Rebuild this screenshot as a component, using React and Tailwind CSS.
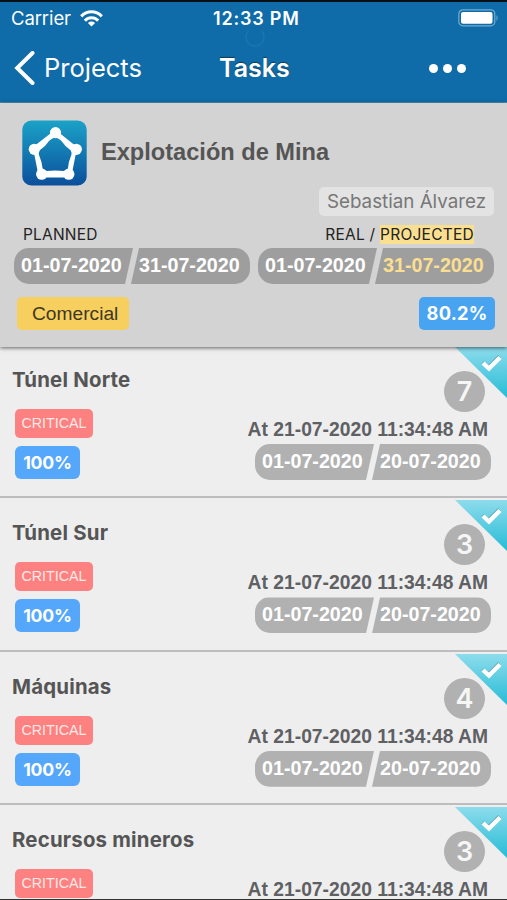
const tasks = [
  { name: 'Túnel Norte', count: 7 },
  { name: 'Túnel Sur', count: 3 },
  { name: 'Máquinas', count: 4 },
  { name: 'Recursos mineros', count: 3 },
];

function StatusBar() {
  return (
    <div className="relative flex h-[32px] items-center pt-px text-white">
      <span className="ml-[11px] w-[70px] text-[18.5px] leading-none tracking-[-0.1px]">Carrier</span>
      <svg width="23" height="18" viewBox="0 0 23 18" className="-ml-px" fill="none" stroke="white" strokeWidth="3">
        <path d="M1.2 6.4 C7 0.3 16 0.3 21.8 6.4" />
        <path d="M4.8 10.6 C8.6 6.7 14.4 6.7 18.2 10.6" />
        <path d="M11.5 16.6 L7.9 12.9 C10 11.1 13 11.1 15.1 12.9 Z" fill="white" stroke="none" />
      </svg>
      <span className="absolute left-[213px] text-[18px] leading-none font-semibold tracking-[0.8px] whitespace-nowrap">
        12:33 PM
      </span>
      <svg width="41" height="18" viewBox="0 0 41 18" className="-mt-0.5 mr-2 ml-auto">
        <rect x="0.8" y="0.8" width="36" height="16" rx="4" fill="none" stroke="#74accd" strokeWidth="1.2" />
        <rect x="3" y="3" width="31.5" height="11.8" rx="2" fill="white" />
        <path d="M38.5 6 q2.4 3 0 6z" fill="#74accd" />
      </svg>
    </div>
  );
}

function NavBar() {
  return (
    <div className="flex h-[68px] items-center text-white">
      <svg width="22" height="34" viewBox="0 0 22 34" className="ml-[14px]" fill="none" stroke="white" strokeWidth="4">
        <path d="M18.5 2 L3.2 17 L18.5 32" strokeLinecap="round" />
      </svg>
      <span className="ml-2 w-[175px] text-[25.5px] leading-none">Projects</span>
      <span className="text-[25px] leading-none font-semibold [text-shadow:0_-1.5px_1px_#123a55]">Tasks</span>
      <div className="mr-[41px] ml-auto flex gap-[5px]">
        <i className="size-[9px] rounded-full bg-white" />
        <i className="size-[9px] rounded-full bg-white" />
        <i className="size-[9px] rounded-full bg-white" />
      </div>
    </div>
  );
}

function ProjectLogo() {
  return (
    <svg width="65" height="66" viewBox="0 0 65 66">
      <defs>
        <linearGradient id="logo" x1="0" y1="0" x2="0" y2="1">
          <stop offset="0" stopColor="#1ba2c7" />
          <stop offset="1" stopColor="#0b4f9c" />
        </linearGradient>
      </defs>
      <rect x="0.3" y="0.5" width="64.4" height="65" rx="9" fill="url(#logo)" />
      {/* ring with a rounded pentagonal hole */}
      <path
        fill="white"
        fillRule="evenodd"
        d="M33.5 8 L58 28 L49 58 H17 L8.5 28 Z M33.2 17.5 Q29.5 18 27 21 Q23 27 18 30 Q16.3 31.5 17 35 Q20 42 20.5 48 Q21 51 24 51 Q33 50.2 42.5 51 Q45.5 51 46 48 Q46.3 42 49.3 35 Q50.2 31.5 48.3 30 Q43.5 27 39.5 21 Q37 18 33.2 17.5 Z"
        clipPath="url(#ring)"
      />
      <clipPath id="ring">
        <path d="M33.5 8 L37.5 13 L55 27 L54 33 L50 53 L46 57.5 H20 L16 53 L12 33 L11 27 L29 13 Z" />
      </clipPath>
      <g fill="white">
        <circle cx="33.5" cy="12.6" r="5.6" />
        <circle cx="54.3" cy="29.3" r="5.6" />
        <circle cx="46.8" cy="54.2" r="5.6" />
        <circle cx="19.7" cy="54.2" r="5.6" />
        <circle cx="12.3" cy="29.3" r="5.6" />
      </g>
    </svg>
  );
}

function DateRange({ from, to, tone = 'bg-[#b1b1b1]', toColor = 'text-white' }) {
  return (
    <div className="flex h-9 w-[236px] shrink-0 font-['Liberation_Sans',sans-serif] text-[19.7px] leading-[35px] font-bold text-white">
      <div
        className={`w-[119px] rounded-l-[15px] pl-[7px] [clip-path:polygon(0_0,100%_0,calc(100%_-_8px)_100%,0_100%)] ${tone}`}
      >
        {from}
      </div>
      <div
        className={`-ml-0.5 w-[119px] rounded-r-[15px] pl-2 [clip-path:polygon(8px_0,100%_0,100%_100%,0_100%)] ${tone} ${toColor}`}
      >
        {to}
      </div>
    </div>
  );
}

function ProjectHeader() {
  return (
    <section className="relative z-10 h-[244px] shrink-0 bg-[#d3d3d3] shadow-[0_1px_4px_rgba(0,0,0,0.6)]">
      <div className="flex h-[84px] items-start pt-[17px] pl-[22px]">
        <ProjectLogo />
        <h1 className="mt-4 ml-3.5 font-['Liberation_Sans',sans-serif] text-[23.6px] leading-8 font-bold text-[#555]">
          Explotación de Mina
        </h1>
      </div>
      <div className="flex justify-end pr-[13px]">
        <span className="h-[29px] w-[175px] rounded-[5px] bg-[#e3e3e3] text-center text-[18.8px] leading-[29px] whitespace-nowrap text-[#777]">
          Sebastian Álvarez
        </span>
      </div>
      <div className="mt-[6px] mb-0.5 flex h-6 items-center justify-between pr-[33px] pl-[23px] text-[15.5px] leading-[19px] text-[#222]">
        <span className="tracking-[0.2px]">PLANNED</span>
        <span className="tracking-[0.25px]">
          REAL / <span className="bg-[#fbdf90]">PROJECTED</span>
        </span>
      </div>
      <div className="flex gap-2 pl-3.5">
        <DateRange from="01-07-2020" to="31-07-2020" tone="bg-[#9e9e9e]" />
        <DateRange from="01-07-2020" to="31-07-2020" tone="bg-[#9e9e9e]" toColor="text-[#fbdf90]" />
      </div>
      <div className="mt-[13px] flex justify-between pr-[12px] pl-[17px] leading-[33px]">
        <span className="h-[33px] w-[112px] rounded-[5px] bg-[#f6cf5f] pl-[15px] font-['Liberation_Sans',sans-serif] text-[19.2px] text-[#3f3722]">
          Comercial
        </span>
        <span className="h-[33px] w-[76px] rounded-[5px] bg-[#48a3f0] text-center text-[18.3px] font-bold tracking-[0.2px] text-white">
          80.2%
        </span>
      </div>
    </section>
  );
}

function DoneRibbon({ id }) {
  return (
    <svg width="52" height="52" viewBox="0 0 52 52" className="absolute top-[2px] right-0">
      <defs>
        <linearGradient id={id} x1="0" y1="0" x2="0" y2="1">
          <stop offset="0" stopColor="#8ddcec" />
          <stop offset="1" stopColor="#26bcd6" />
        </linearGradient>
      </defs>
      <path d="M0 0 H52 V51 Z" fill={`url(#${id})`} />
      <path d="M27.5 15.5 L33.5 20.5 L44.5 9.5" fill="none" stroke="#6ba7b3" strokeWidth="4" />
      <path d="M28 16 L34 21.5 L45 10.5" fill="none" stroke="white" strokeWidth="4.4" />
    </svg>
  );
}

function TaskRow({ task, index }) {
  return (
    <li className="relative h-[153.4px] border-b-2 border-[#bdbdbd]">
      <DoneRibbon id={`ribbon-${index}`} />
      <div className="flex justify-between pr-4 pl-3">
        <div>
          <h2 className="mt-[20px] h-[44px] text-[20.4px] leading-[30px] font-bold tracking-[0.2px] whitespace-nowrap text-[#555]">
            {task.name}
          </h2>
          <div className="ml-[3px] h-[29px] w-[78px] rounded-[5px] bg-[#fd8180] text-center font-['Liberation_Sans',sans-serif] text-[14.3px] leading-[29px] text-[#ffe9e6]">
            CRITICAL
          </div>
          <div className="mt-2 ml-[3px] h-[33px] w-[65px] rounded-[6px] bg-[#55a7fb] text-center text-[17.7px] leading-[33px] font-bold tracking-[-0.2px] text-white">
            100%
          </div>
        </div>
        <div className="flex flex-col items-end">
          <div className="mt-[26px] mr-[6px] size-[41px] shrink-0 rounded-full bg-[#b1b1b1] text-center text-[27px] leading-[41px] font-semibold text-[#f6f6f6]">
            {task.count}
          </div>
          <div className="mt-1 mr-[3px] h-[28px] font-['Liberation_Sans',sans-serif] text-[19.3px] leading-[28px] font-bold whitespace-nowrap text-[#5e6063]">
            At 21-07-2020 11:34:48 AM
          </div>
          <DateRange from="01-07-2020" to="20-07-2020" />
        </div>
      </div>
    </li>
  );
}

export default function App() {
  return (
    <div className="flex h-[900px] w-[507px] flex-col overflow-hidden border-t-2 border-b border-t-[#06101a] border-b-[#333] bg-[#eee] font-['Inter',sans-serif]">
      <header className="relative h-[101px] shrink-0 border-b border-[#4d8fb5] bg-[#0f6ca8]">
        <StatusBar />
        <NavBar />
        {/* refresh spinner, barely visible behind the clock */}
        <i className="absolute top-[25px] left-[245px] size-[20px] rounded-full border-2 border-[#1874af] border-t-transparent" />
      </header>
      <ProjectHeader />
      <ul className="-mt-[2px]">
        {tasks.map((task, index) => (
          <TaskRow key={task.name} task={task} index={index} />
        ))}
      </ul>
    </div>
  );
}
